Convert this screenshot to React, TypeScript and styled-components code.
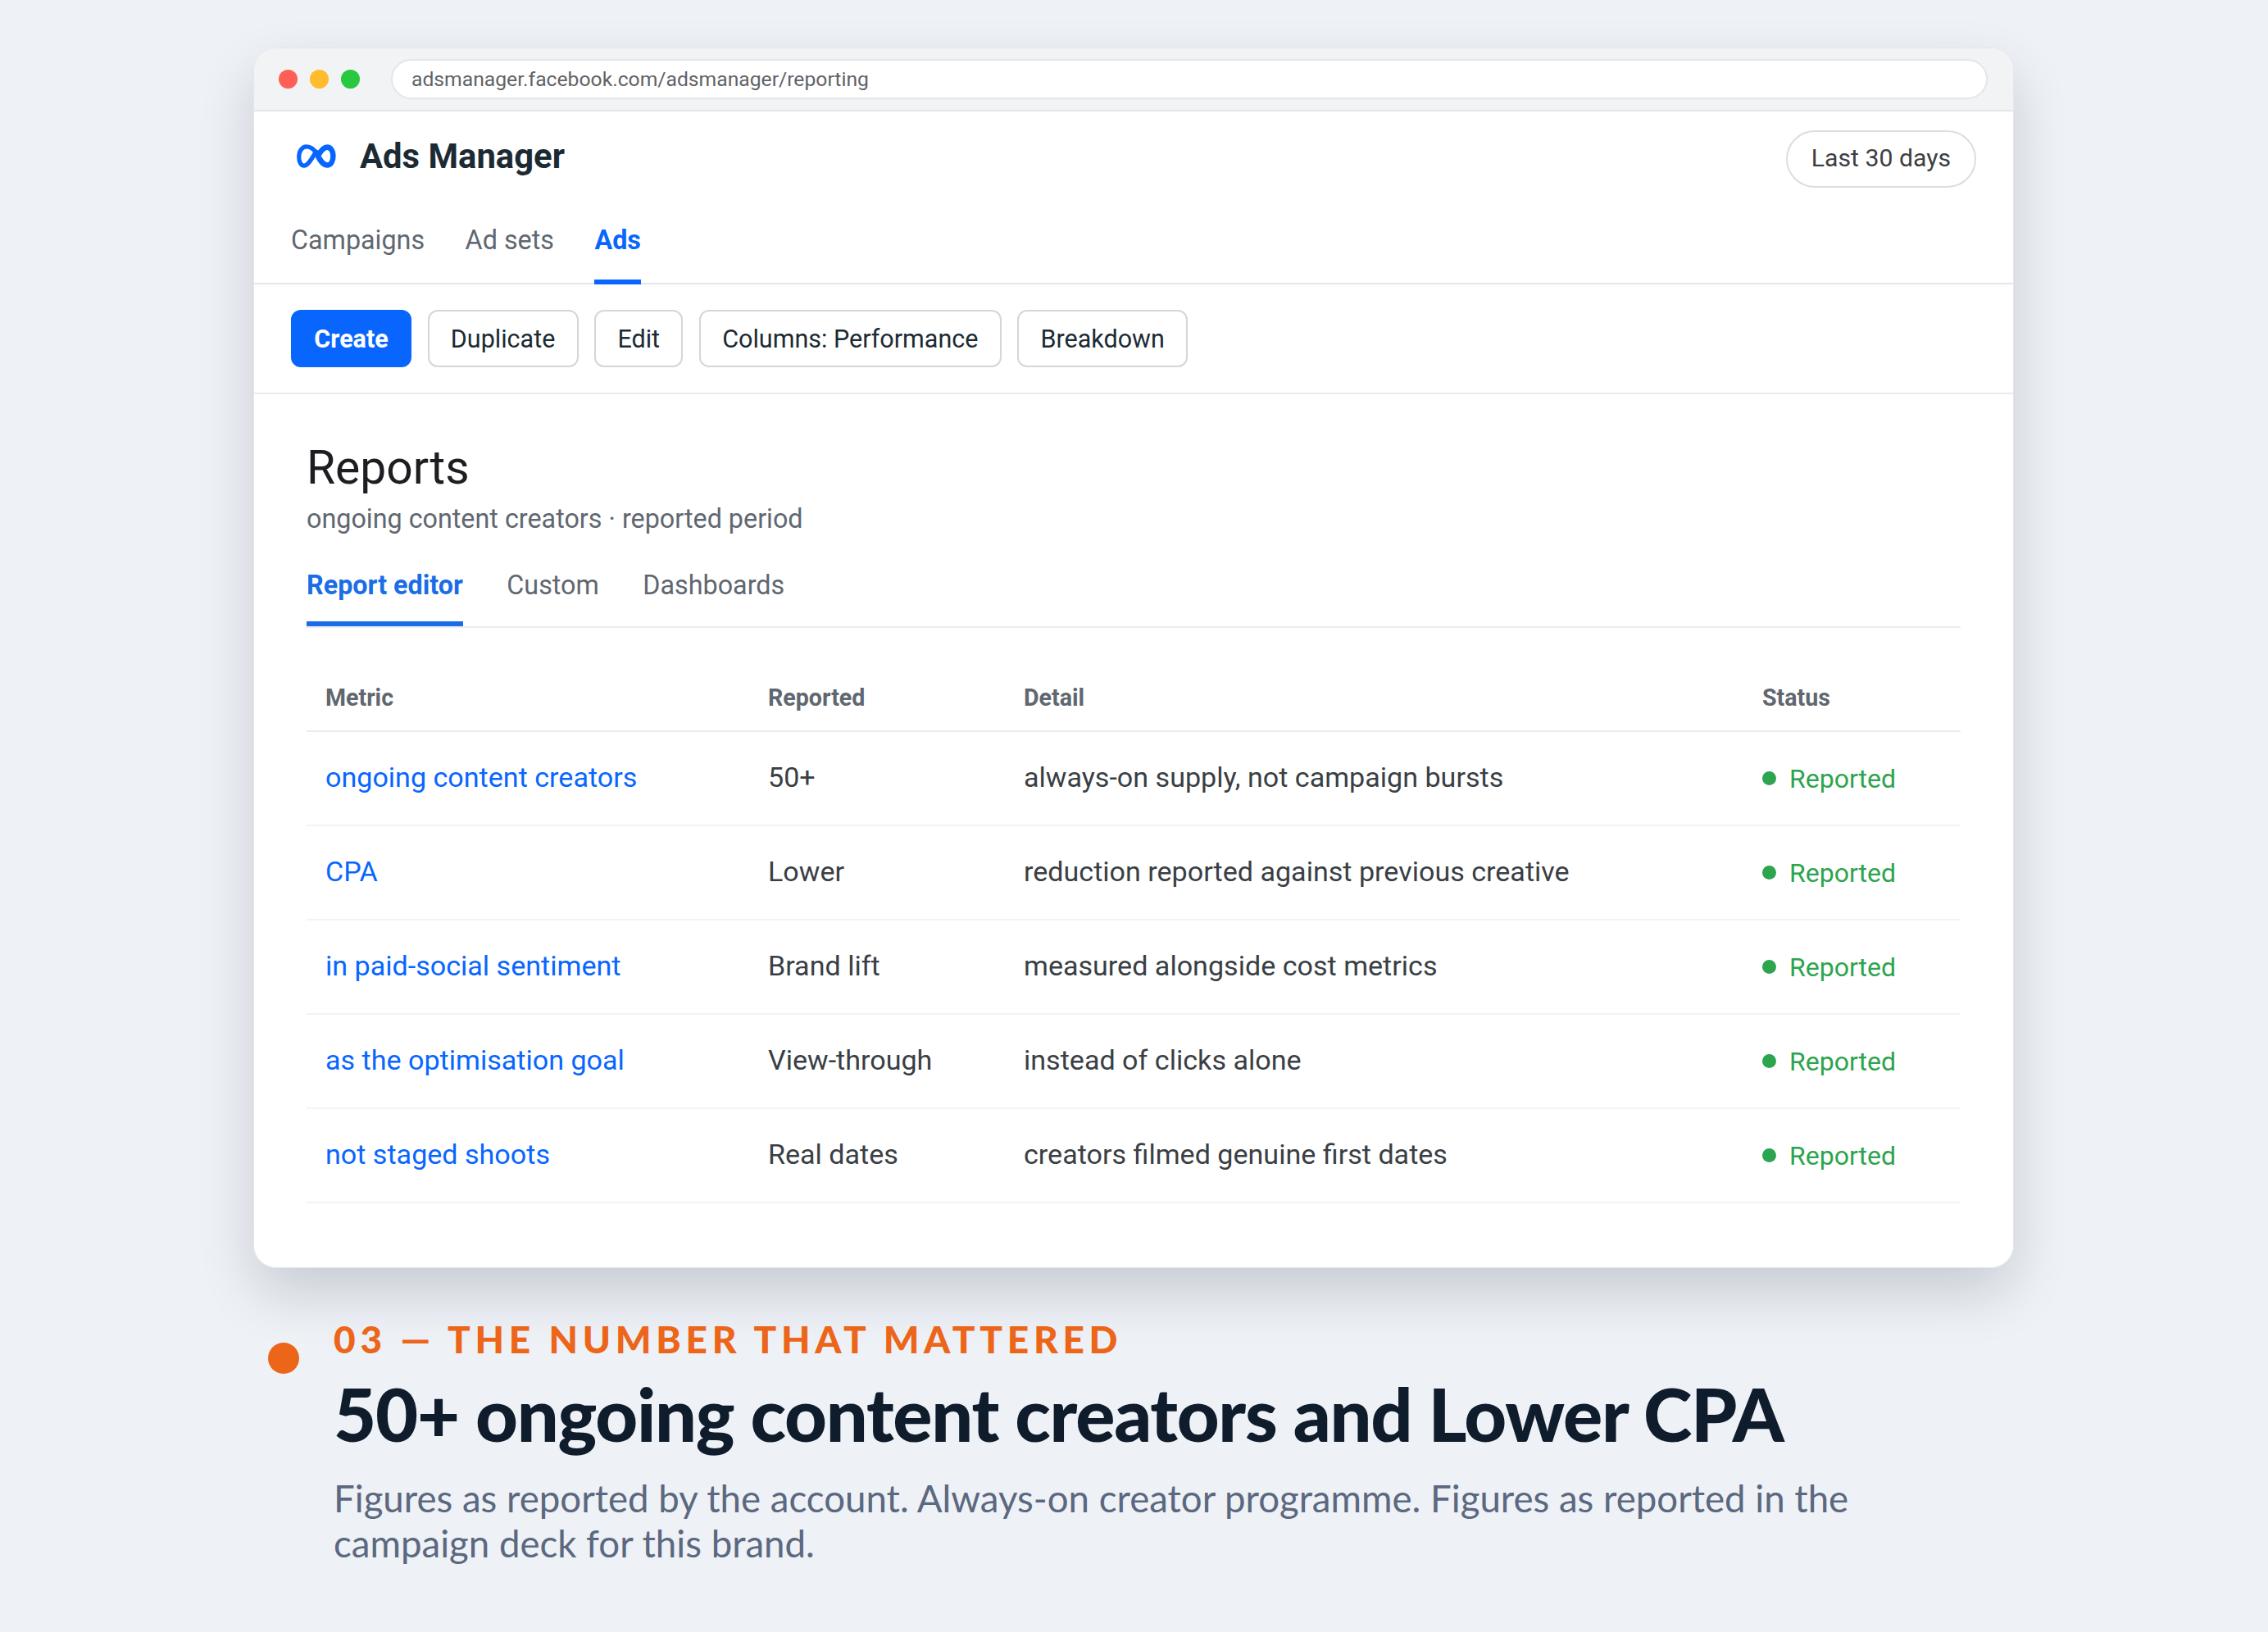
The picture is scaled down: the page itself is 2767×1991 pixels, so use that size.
import React from 'react';
import styled, { createGlobalStyle } from 'styled-components';

const BLUE = '#0866ff';

const GlobalStyle = createGlobalStyle`
  html, body {
    margin: 0;
    padding: 0;
    background: #eef1f6;
  }
  body {
    font-family: Roboto, "Liberation Sans", sans-serif;
  }
  * {
    box-sizing: border-box;
  }
`;

const Page = styled.div`
  width: 2767px;
  height: 1991px;
  padding: 58px 310px 0 309px;
  overflow: hidden;
`;

const Card = styled.div`
  background: #fff;
  border: 1px solid #e3e6ec;
  border-radius: 28px;
  overflow: hidden;
`;

const Shadowed = styled.div`
  border-radius: 28px;
  box-shadow: 0 30px 70px -5px rgba(16, 24, 40, 0.19);
`;

const ChromeBar = styled.div`
  display: flex;
  align-items: center;
  height: 77px;
  padding: 0 31px 0 30px;
  background: #f1f3f5;
  border-bottom: 2px solid #e3e6ea;
`;

const Dots = styled.div`
  display: flex;
  gap: 15px;
  margin-right: 38px;
`;

const Dot = styled.span<{ $color: string }>`
  width: 23px;
  height: 23px;
  border-radius: 50%;
  background: ${(p) => p.$color};
`;

const UrlBar = styled.div`
  flex: 1;
  height: 49px;
  padding: 0 23px;
  display: flex;
  align-items: center;
  background: #fff;
  border: 2px solid #e3e6ea;
  border-radius: 25px;
  font-size: 24.7px;
  color: #5f6368;
`;

const TopBar = styled.div`
  padding: 23px 45px 0 45px;
  border-bottom: 2px solid #e4e6eb;
`;

const BrandRow = styled.div`
  display: flex;
  justify-content: space-between;
  align-items: flex-start;
`;

const Brand = styled.div`
  display: flex;
  align-items: center;
  gap: 29px;
  padding: 0 0 0 7px;
  height: 63px;
`;

const BrandName = styled.div`
  font-size: 41.8px;
  font-weight: 700;
  color: #1c2b33;
`;

const RangePill = styled.div`
  height: 70px;
  padding: 0 29px 3px;
  display: flex;
  align-items: center;
  border: 2px solid #dadde1;
  border-radius: 35px;
  font-size: 30.2px;
  color: #3c4043;
`;

const NavTabs = styled.div`
  display: flex;
  gap: 49.5px;
  margin-top: 44px;
`;

const NavTab = styled.div<{ $active?: boolean }>`
  font-size: 32.3px;
  line-height: 40px;
  padding-bottom: 28px;
  font-weight: ${(p) => (p.$active ? 700 : 400)};
  color: ${(p) => (p.$active ? BLUE : '#606770')};
  border-bottom: 6px solid ${(p) => (p.$active ? BLUE : 'transparent')};
  margin-bottom: -2px;
`;

const Toolbar = styled.div`
  display: flex;
  gap: 19.5px;
  padding: 31px 45px;
  border-bottom: 2px solid #e9ebef;
`;

const ToolButton = styled.div<{ $primary?: boolean }>`
  height: 70px;
  padding: 0 26.3px;
  display: flex;
  align-items: center;
  border-radius: 12px;
  font-size: 30.5px;
  font-weight: ${(p) => (p.$primary ? 700 : 400)};
  color: ${(p) => (p.$primary ? '#fff' : '#1c2b33')};
  background: ${(p) => (p.$primary ? BLUE : '#fff')};
  border: 2px solid ${(p) => (p.$primary ? BLUE : '#d3d6db')};
`;

const Content = styled.div`
  padding: 57px 64px 78px 64px;
`;

const Heading = styled.h1`
  margin: 0;
  font-size: 57px;
  line-height: 66px;
  font-weight: 400;
  color: #1c1e21;
`;

const Subheading = styled.div`
  margin-top: 9px;
  font-size: 32.3px;
  line-height: 40px;
  color: #606770;
`;

const ReportTabs = styled.div`
  display: flex;
  gap: 53.5px;
  margin-top: 41px;
  border-bottom: 2px solid #e9ebef;
`;

const ReportTab = styled.div<{ $active?: boolean }>`
  font-size: 32.3px;
  line-height: 40px;
  padding-bottom: 24px;
  font-weight: ${(p) => (p.$active ? 700 : 400)};
  color: ${(p) => (p.$active ? '#1a6de6' : '#606770')};
  border-bottom: 6px solid ${(p) => (p.$active ? '#1a6de6' : 'transparent')};
`;

const Table = styled.table`
  width: 100%;
  margin-top: 44px;
  border-collapse: collapse;
  table-layout: fixed;
`;

const HeadCell = styled.th`
  height: 82px;
  padding: 0 23px;
  text-align: left;
  font-size: 28.6px;
  font-weight: 700;
  color: #606770;
  border-bottom: 2px solid #e9ebef;
`;

const BodyCell = styled.td`
  height: 115px;
  padding: 0 23px 4px;
  font-size: 34.1px;
  color: #3a3f45;
  border-bottom: 2px solid #f2f3f5;
`;

const MetricLink = styled.span`
  color: ${BLUE};
`;

const StatusTag = styled.div`
  display: flex;
  align-items: center;
  gap: 16px;
  padding-top: 4px;
  font-size: 32px;
  color: #2da44e;
  &::before {
    content: '';
    width: 17px;
    height: 17px;
    border-radius: 50%;
    background: #2da44e;
  }
`;

const Caption = styled.div`
  display: flex;
  align-items: flex-start;
  gap: 42px;
  margin-top: 59px;
  padding-left: 18px;
  font-family: Lato, "Liberation Sans", sans-serif;
`;

const CaptionDot = styled.span`
  flex: none;
  width: 38px;
  height: 38px;
  margin-top: 32px;
  border-radius: 50%;
  background: #ec6519;
`;

const CaptionBody = styled.div`
  width: 1900px;
`;

const Eyebrow = styled.div`
  font-size: 46px;
  line-height: 55px;
  font-weight: 900;
  letter-spacing: 5.7px;
  color: #ec6519;
`;

const Headline = styled.div`
  margin-top: 13px;
  font-size: 90px;
  line-height: 100px;
  font-weight: 900;
  letter-spacing: -1.25px;
  color: #0f1c2c;
  white-space: nowrap;
`;

const Note = styled.div`
  margin-top: 26px;
  font-size: 45.6px;
  line-height: 55px;
  color: #5b6880;
`;

const rows = [
  ['ongoing content creators', '50+', 'always-on supply, not campaign bursts'],
  ['CPA', 'Lower', 'reduction reported against previous creative'],
  ['in paid-social sentiment', 'Brand lift', 'measured alongside cost metrics'],
  ['as the optimisation goal', 'View-through', 'instead of clicks alone'],
  ['not staged shoots', 'Real dates', 'creators filmed genuine first dates'],
];

const MetaLogo = () => (
  <svg width="48" height="29" viewBox="0 0 48 29" fill="none" strokeLinecap="round">
    <path
      d="M25 12C21.5 6.5 17 2.8 12 2.8C6 2.8 2.7 9 2.7 16C2.7 22 5.5 26.2 9 26.2C14 26.2 18.5 17 23.5 9"
      stroke={BLUE}
      strokeWidth="5.2"
    />
    <path
      d="M24 10.5C27 17 31 25.2 37 25.5C42 25.5 44.4 20 44.4 14C44.4 8 41.5 3.6 37 3.6C33 3.6 29.5 8 26.5 13"
      stroke={BLUE}
      strokeWidth="6.6"
    />
  </svg>
);

const App: React.FC = () => {
  return (
    <Page>
      <GlobalStyle />
      <Shadowed>
        <Card>
          <ChromeBar>
            <Dots>
              <Dot $color="#ff5f57" />
              <Dot $color="#febc2e" />
              <Dot $color="#28c840" />
            </Dots>
            <UrlBar>adsmanager.facebook.com/adsmanager/reporting</UrlBar>
          </ChromeBar>
          <TopBar>
            <BrandRow>
              <Brand>
                <MetaLogo />
                <BrandName>Ads Manager</BrandName>
              </Brand>
              <RangePill>Last 30 days</RangePill>
            </BrandRow>
            <NavTabs>
              <NavTab>Campaigns</NavTab>
              <NavTab>Ad sets</NavTab>
              <NavTab $active>Ads</NavTab>
            </NavTabs>
          </TopBar>
          <Toolbar>
            <ToolButton $primary>Create</ToolButton>
            <ToolButton>Duplicate</ToolButton>
            <ToolButton>Edit</ToolButton>
            <ToolButton>Columns: Performance</ToolButton>
            <ToolButton>Breakdown</ToolButton>
          </Toolbar>
          <Content>
            <Heading>Reports</Heading>
            <Subheading>ongoing content creators · reported period</Subheading>
            <ReportTabs>
              <ReportTab $active>Report editor</ReportTab>
              <ReportTab>Custom</ReportTab>
              <ReportTab>Dashboards</ReportTab>
            </ReportTabs>
            <Table>
              <colgroup>
                <col style={{ width: 540 }} />
                <col style={{ width: 312 }} />
                <col style={{ width: 901 }} />
                <col />
              </colgroup>
              <thead>
                <tr>
                  <HeadCell>Metric</HeadCell>
                  <HeadCell>Reported</HeadCell>
                  <HeadCell>Detail</HeadCell>
                  <HeadCell>Status</HeadCell>
                </tr>
              </thead>
              <tbody>
                {rows.map((row) => (
                  <tr key={row[0]}>
                    <BodyCell>
                      <MetricLink>{row[0]}</MetricLink>
                    </BodyCell>
                    <BodyCell>{row[1]}</BodyCell>
                    <BodyCell>{row[2]}</BodyCell>
                    <BodyCell>
                      <StatusTag>Reported</StatusTag>
                    </BodyCell>
                  </tr>
                ))}
              </tbody>
            </Table>
          </Content>
        </Card>
      </Shadowed>
      <Caption>
        <CaptionDot />
        <CaptionBody>
          <Eyebrow>03 — THE NUMBER THAT MATTERED</Eyebrow>
          <Headline>50+ ongoing content creators and Lower CPA</Headline>
          <Note>
            Figures as reported by the account. Always-on creator programme. Figures as reported in the
            campaign deck for this brand.
          </Note>
        </CaptionBody>
      </Caption>
    </Page>
  );
};

export default App;
